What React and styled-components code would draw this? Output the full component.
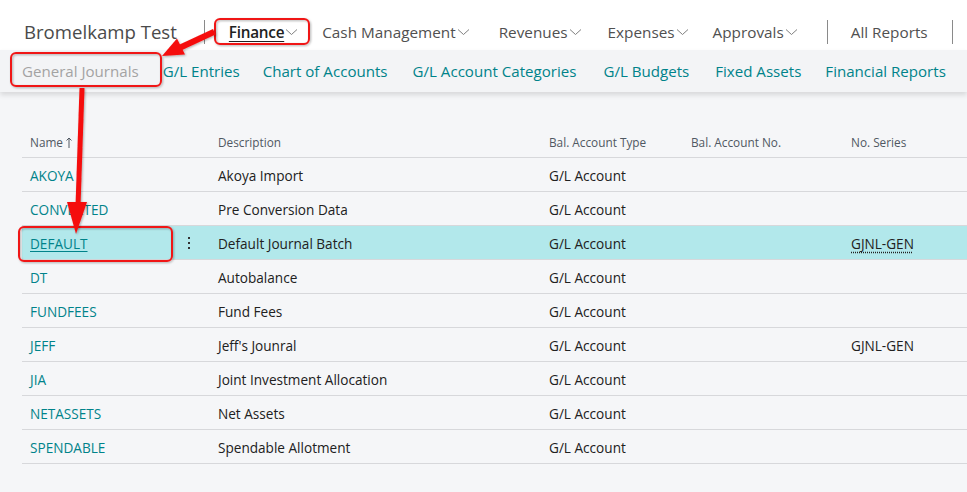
import React from "react";
import styled, { createGlobalStyle } from "styled-components";

const Global = createGlobalStyle`
  html, body { margin: 0; padding: 0; }
  body {
    background: #f5f6f8;
    font-family: "Open Sans", "Noto Sans", sans-serif;
    width: 967px;
    height: 492px;
    overflow: hidden;
  }
`;

const Page = styled.div`
  position: relative;
  width: 967px;
  height: 492px;
  background: #f5f6f8;
`;

const TopBar = styled.div`
  height: 50px;
  box-sizing: border-box;
  padding: 13px 0 0 24px;
  background: #ffffff;
  display: flex;
  align-items: center;
  white-space: nowrap;
`;

const Company = styled.div`
  font-size: 18.6px;
  color: #4a4a4a;
  margin-right: 27px;
`;

const Sep = styled.div`
  width: 1px;
  height: 24px;
  background: #8a8a8a;
  margin: 0 ${(p) => p.$r || 0}px 0 ${(p) => p.$l || 0}px;
`;

const NavItem = styled.div`
  font-size: 15.3px;
  color: ${(p) => (p.$active ? "#212121" : "#505050")};
  font-weight: ${(p) => (p.$active ? 600 : 400)};
  letter-spacing: ${(p) => (p.$active ? "-0.25px" : "0")};
  display: flex;
  align-items: center;
  margin-left: ${(p) => p.$ml}px;
  span {
    text-decoration: ${(p) => (p.$active ? "underline" : "none")};
    text-underline-offset: 3px;
    text-decoration-thickness: 1px;
  }
  svg { margin-left: 1px; }
`;

const SubBar = styled.div`
  height: 42px;
  background: #f3f4f6;
  display: flex;
  align-items: center;
  padding-left: 22px;
  box-shadow: 0 3px 5px rgba(0, 0, 0, 0.12);
  white-space: nowrap;
  position: relative;
`;

const SubItem = styled.div`
  font-size: 15.1px;
  color: ${(p) => (p.$muted ? "#a3a3a3" : "#00838a")};
  margin-right: ${(p) => p.$mr}px;
`;

const Table = styled.div`
  margin: 36px 0 0 22px;
  display: grid;
  grid-template-columns: 143px 45px 331px 142px 160px 1fr;
`;

const HeadCell = styled.div`
  height: 30px;
  box-sizing: border-box;
  padding-bottom: 1px;
  display: flex;
  align-items: center;
  gap: 3px;
  padding-left: 8px;
  font-size: 11.8px;
  color: #505862;
  border-bottom: 1px solid #d7d8db;
  box-shadow: ${(p) => (p.$gap ? "1px 0 0 #f5f6f8" : "none")};
`;

const Cell = styled.div`
  height: 34px;
  box-sizing: border-box;
  padding-top: 1px;
  display: flex;
  align-items: center;
  padding-left: 8px;
  font-size: 13.6px;
  color: ${(p) => (p.$link ? "#00838a" : "#212121")};
  background: ${(p) => (p.$sel ? "#b2e8eb" : "transparent")};
  border-bottom: 1px solid #d7d8db;
  box-shadow: ${(p) => (p.$gap ? "1px 0 0 #f5f6f8" : "none")};
  white-space: nowrap;
  span.u {
    text-decoration: underline;
    text-underline-offset: 2px;
  }
  span.d {
    text-decoration: underline dotted;
    text-underline-offset: 3px;
  }
`;

const Dots = styled.div`
  display: flex;
  flex-direction: column;
  gap: 3px;
  margin-left: 15px;
  i {
    width: 2px;
    height: 2px;
    background: #333;
    display: block;
  }
`;

const Overlay = styled.svg`
  position: absolute;
  left: 0;
  top: 0;
  pointer-events: none;
`;

const Chevron = () => (
  <svg width="13" height="8" viewBox="0 0 13 8">
    <path d="M1 1.5 L6.5 6.5 L12 1.5" fill="none" stroke="#808080" strokeWidth="1" />
  </svg>
);

const SortUp = () => (
  <svg width="6" height="11" viewBox="0 0 6 11">
    <path d="M3 1 V11 M0.5 3.5 L3 1 L5.5 3.5" fill="none" stroke="#505862" strokeWidth="1" />
  </svg>
);

const rows = [
  ["AKOYA", "Akoya Import", "G/L Account", "", ""],
  ["CONVERTED", "Pre Conversion Data", "G/L Account", "", ""],
  ["DEFAULT", "Default Journal Batch", "G/L Account", "", "GJNL-GEN", true],
  ["DT", "Autobalance", "G/L Account", "", ""],
  ["FUNDFEES", "Fund Fees", "G/L Account", "", ""],
  ["JEFF", "Jeff's Jounral", "G/L Account", "", "GJNL-GEN"],
  ["JIA", "Joint Investment Allocation", "G/L Account", "", ""],
  ["NETASSETS", "Net Assets", "G/L Account", "", ""],
  ["SPENDABLE", "Spendable Allotment", "G/L Account", "", ""],
];

export default function App() {
  return (
    <Page>
      <Global />
      <TopBar>
        <Company>Bromelkamp Test</Company>
        <Sep />
        <NavItem $active $ml={24}><span>Finance</span><Chevron /></NavItem>
        <NavItem $ml={24}><span>Cash Management</span><Chevron /></NavItem>
        <NavItem $ml={29}><span>Revenues</span><Chevron /></NavItem>
        <NavItem $ml={26}><span>Expenses</span><Chevron /></NavItem>
        <NavItem $ml={24}><span>Approvals</span><Chevron /></NavItem>
        <Sep $l={29} $r={23} />
        <NavItem $ml={0}><span>All Reports</span></NavItem>
        <Sep $l={24} />
      </TopBar>
      <SubBar>
        <SubItem $muted $mr={24}>General Journals</SubItem>
        <SubItem $mr={23}>G/L Entries</SubItem>
        <SubItem $mr={25}>Chart of Accounts</SubItem>
        <SubItem $mr={27}>G/L Account Categories</SubItem>
        <SubItem $mr={26}>G/L Budgets</SubItem>
        <SubItem $mr={24}>Fixed Assets</SubItem>
        <SubItem $mr={24}>Financial Reports</SubItem>
      </SubBar>
      <Table>
        <HeadCell $gap>Name<SortUp /></HeadCell>
        <HeadCell $gap />
        <HeadCell>Description</HeadCell>
        <HeadCell>Bal. Account Type</HeadCell>
        <HeadCell>Bal. Account No.</HeadCell>
        <HeadCell>No. Series</HeadCell>
        {rows.map(([name, desc, type, no, series, sel]) => (
          <React.Fragment key={name}>
            <Cell $link $sel={sel} $gap>
              {sel ? <span className="u">{name}</span> : name}
            </Cell>
            <Cell $sel={sel} $gap>
              {sel && (
                <Dots><i /><i /><i /></Dots>
              )}
            </Cell>
            <Cell $sel={sel}>{desc}</Cell>
            <Cell $sel={sel}>{type}</Cell>
            <Cell $sel={sel}>{no}</Cell>
            <Cell $sel={sel}>
              {series && sel ? <span className="d">{series}</span> : series}
            </Cell>
          </React.Fragment>
        ))}
      </Table>
      <Overlay width="967" height="492" viewBox="0 0 967 492">
        <defs>
          <filter id="sh" x="-20%" y="-20%" width="140%" height="140%">
            <feDropShadow dx="1" dy="1" stdDeviation="1.2" floodColor="#000" floodOpacity="0.3" />
          </filter>
        </defs>
        <g filter="url(#sh)" fill="none" stroke="#f01818" strokeWidth="2">
          <rect x="215" y="19" width="94" height="25" rx="5" />
          <rect x="11" y="53" width="150" height="33" rx="5" />
          <rect x="19" y="227" width="153" height="34" rx="5" />
        </g>
        <g filter="url(#sh)" fill="#f50f0f">
          <polygon points="213,29 215.5,34.5 180,51 177.5,45.5" />
          <polygon points="162,56 177,38.5 185,54.5" />
          <polygon points="79.5,88 84.5,88 80.5,206 75.5,206" />
          <polygon points="67,202 87,202 76,234" />
        </g>
      </Overlay>
    </Page>
  );
}
